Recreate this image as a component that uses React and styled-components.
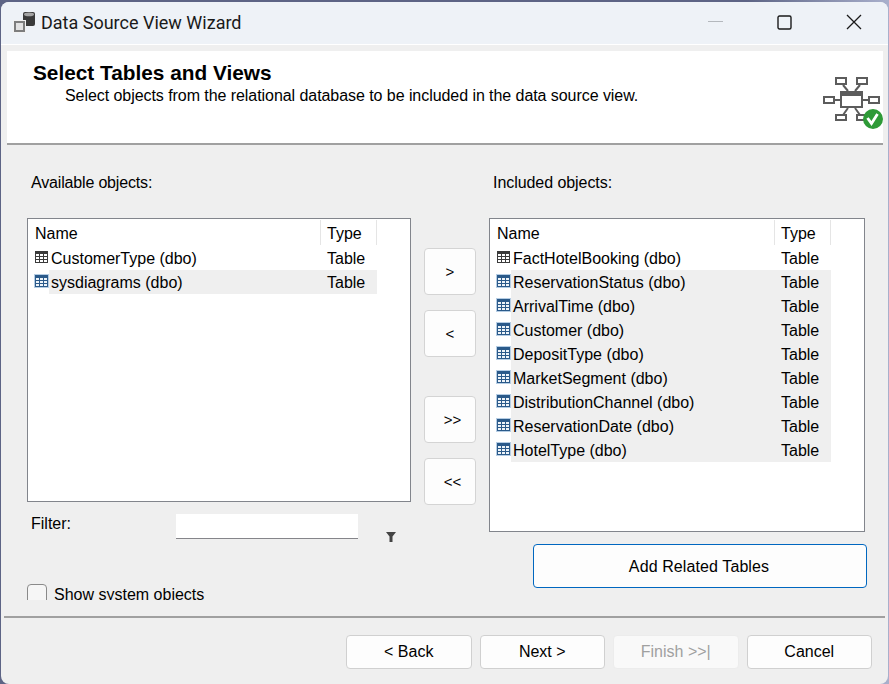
import React from 'react';
import styled, { createGlobalStyle } from 'styled-components';

const GlobalStyle = createGlobalStyle`
  html, body {
    margin: 0;
    padding: 0;
    background: #5d6485;
  }
  * {
    box-sizing: border-box;
  }
`;

const Desktop = styled.div`
  width: 889px;
  height: 684px;
  padding: 2px 0 0 1px;
  overflow: hidden;
  background: linear-gradient(90deg, #5d6485 0, #5d6485 84%, #a9b0cc 100%);
`;

const Window = styled.div`
  width: 887px;
  height: 682px;
  display: flex;
  flex-direction: column;
  background: #efefef;
  border-radius: 8px;
  overflow: hidden;
  font-family: "Liberation Sans", Arial, sans-serif;
  font-size: 16px;
  color: #000;
`;

const TitleBar = styled.div`
  flex: 0 0 43px;
  display: flex;
  align-items: center;
  padding: 0 0 2px 12px;
  background: #eef2f7;
  border-bottom: 1px solid #fff;
`;

const TitleText = styled.span`
  margin-left: 6px;
  font-family: Roboto, sans-serif;
  font-size: 18px;
  color: #1a1a1a;
`;

const WindowButtons = styled.div`
  margin-left: auto;
  display: flex;
  align-items: center;
  gap: 54px;
  padding-right: 26px;
`;

const Banner = styled.div`
  flex: 0 0 92px;
  margin: 6px 5px 0 6px;
  padding: 11px 0 0 26px;
  display: flex;
  justify-content: space-between;
  background: #fff;
`;

const BannerTitle = styled.div`
  font-size: 20.8px;
  font-weight: bold;
  line-height: 22px;
`;

const BannerSub = styled.div`
  margin: 3px 0 0 32px;
  line-height: 18px;
  letter-spacing: -0.06px;
`;

const BannerIcon = styled.div`
  margin-top: 13px;
  width: 63px;
  height: 56px;
`;

const Rule = styled.div`
  flex: none;
  height: 2px;
  background: #a0a0a0;
  margin: ${({ $margin }) => $margin};
`;

const Body = styled.div`
  flex: 1;
  display: grid;
  grid-template-columns: 384px 78px 376px;
  padding-left: 26px;
`;

const Column = styled.div`
  display: flex;
  flex-direction: column;
`;

const Caption = styled.div`
  height: 73px;
  padding: 29px 0 0 4px;
  line-height: 18px;
  letter-spacing: ${({ $spacing }) => $spacing}px;
`;

const ListBox = styled.div`
  height: ${({ $height }) => $height}px;
  background: #fff;
  border: 1px solid #82858c;
  padding-top: 1px;
`;

const ListHead = styled.div`
  width: ${({ $width }) => $width}px;
  height: 26px;
  display: flex;
  line-height: 28px;
`;

const NameHead = styled.div`
  flex: 1;
  padding-left: 7px;
`;

const TypeHead = styled.div`
  width: 57px;
  height: 25px;
  padding-left: 6px;
  border-left: 1px solid #e5e5e5;
  border-right: 1px solid #e5e5e5;
`;

const Row = styled.div`
  width: ${({ $width }) => $width}px;
  height: 24px;
  display: flex;
  align-items: flex-start;
  padding-left: 6px;
  line-height: 26px;
`;

const RowName = styled.div`
  flex: 1;
  height: 24px;
  padding-left: 2px;
  background: ${({ $selected }) => ($selected ? '#efefef' : 'transparent')};
`;

const RowType = styled.div`
  width: 56px;
  height: 24px;
  padding-left: 6px;
  background: ${({ $selected }) => ($selected ? '#efefef' : 'transparent')};
`;

const MoveColumn = styled.div`
  padding: 103px 0 0 13px;
  display: flex;
  flex-direction: column;
`;

const MoveButton = styled.button`
  width: 52px;
  height: 47px;
  margin-bottom: ${({ $gap }) => $gap}px;
  padding: 0 0 0 ${({ $double }) => ($double ? 5 : 0)}px;
  background: #fdfdfd;
  border: 1px solid #d4d4d4;
  border-radius: 4px;
  font: inherit;
  font-size: 15px;
  color: #000;
`;

const FilterRow = styled.div`
  display: flex;
  height: 40px;
  margin-top: 12px;
`;

const FilterLabel = styled.div`
  width: 149px;
  padding: 1px 0 0 4px;
  line-height: 18px;
`;

const FilterInput = styled.div`
  width: 182px;
  height: 25px;
  background: #fff;
  border-bottom: 1px solid #85858a;
`;

const FilterIcon = styled.div`
  margin: 18px 0 0 28px;

  svg {
    display: block;
  }
`;

const CheckRow = styled.div`
  height: 16px;
  margin-top: 30px;
  display: flex;
  overflow: hidden;
`;

const CheckBox = styled.div`
  width: 20px;
  height: 24px;
  background: #f6f6f6;
  border: 1px solid #8a8a8a;
  border-radius: 4px;
`;

const CheckLabel = styled.div`
  margin-left: 7px;
  line-height: 22px;
`;

const RelatedButton = styled.button`
  display: block;
  width: 334px;
  height: 44px;
  margin: 12px 0 0 44px;
  padding: 2px 2px 0 0;
  background: #fdfdfd;
  border: 1px solid #0067c0;
  border-radius: 4px;
  font: inherit;
  letter-spacing: 0.1px;
  color: #000;
`;

const Footer = styled.div`
  flex: 0 0 66px;
  display: flex;
  justify-content: flex-end;
  gap: 8px;
  padding: 17px 16px 0 0;
`;

const FootButton = styled.button`
  width: 125.5px;
  height: 34px;
  padding: 0;
  background: ${({ disabled }) => (disabled ? '#f9f9f9' : '#fdfdfd')};
  border: 1px solid ${({ disabled }) => (disabled ? '#ececec' : '#d0d0d0')};
  border-radius: 4px;
  font: inherit;
  color: ${({ disabled }) => (disabled ? '#a0a0a0' : '#000')};
`;

const TableIcon = ({ selected }) => {
  const ink = selected ? '#2b5a8a' : '#3b3b3b';
  return (
    <svg width="15" height="14" viewBox="0 0 15 14" style={{ flex: 'none', marginTop: 4 }}>
      {selected && <rect width="15" height="14" fill="#b5cde4" />}
      <rect x="1.5" y="1.5" width="12" height="11" fill={selected ? '#eef4f9' : '#fff'} stroke={ink} />
      <path d="M1 2h13v2H1z" fill={ink} />
      <path d="M2 6.5h11M2 9.5h11M5.5 4v8M9.5 4v8" fill="none" stroke={ink} />
    </svg>
  );
};

const AppIcon = () => (
  <svg width="22" height="21" viewBox="0 0 22 21" style={{ flex: 'none' }}>
    <rect x="10" y="0" width="12" height="14" rx="2" fill="#3a3a3a" />
    <ellipse cx="16" cy="2.4" rx="5" ry="1.8" fill="#a4a4a4" />
    <rect x="0.5" y="8.5" width="12" height="12" fill="#7d7d7d" stroke="#f2f2f2" />
    <rect x="3" y="11" width="7" height="7" fill="#e2e2e2" />
  </svg>
);

const MaximizeIcon = () => (
  <svg width="15" height="15" viewBox="0 0 15 15" style={{ display: 'block' }}>
    <rect x="1" y="1" width="13" height="13" rx="1.5" fill="none" stroke="#1a1a1a" strokeWidth="1.4" />
  </svg>
);

const CloseIcon = () => (
  <svg width="16" height="16" viewBox="0 0 16 16" style={{ display: 'block' }}>
    <path d="M1 1l14 14M15 1L1 15" stroke="#1a1a1a" strokeWidth="1.3" />
  </svg>
);

const MinimizeIcon = () => (
  <svg width="15" height="2" viewBox="0 0 15 2" style={{ display: 'block' }}>
    <rect width="15" height="1" fill="#b4b8bd" />
  </svg>
);

const DiagramIcon = () => (
  <svg width="63" height="56" viewBox="0 0 63 56" style={{ display: 'block' }}>
    <g fill="none" stroke="#5c5c5c" strokeWidth="2">
      <path d="M23 10l5 6M40 10l-5 6M14 25h7M42 25h7M23 40l5-7M40 40l-5-7" />
      <rect x="16" y="3" width="10" height="6" fill="#fff" />
      <rect x="37" y="3" width="10" height="6" fill="#fff" />
      <rect x="4" y="22" width="10" height="6" fill="#fff" />
      <rect x="49" y="22" width="10" height="6" fill="#fff" />
      <rect x="16" y="40" width="10" height="5" fill="#fff" />
      <rect x="37" y="40" width="10" height="5" fill="#fff" />
      <rect x="21" y="17" width="21" height="15" fill="#fff" />
    </g>
    <rect x="20" y="16" width="23" height="5" fill="#5c5c5c" />
    <circle cx="53" cy="44" r="10" fill="#2e9a37" />
    <path d="M47.5 43l4 5.5 6-9.5" fill="none" stroke="#fff" strokeWidth="2.8" />
  </svg>
);

const FunnelIcon = () => (
  <svg width="10" height="10" viewBox="0 0 10 10">
    <path d="M0 0h10L6.5 4.5V10h-3V4.5z" fill="#444" />
  </svg>
);

const available = [
  { name: 'CustomerType (dbo)' },
  { name: 'sysdiagrams (dbo)', selected: true },
];

const included = [
  { name: 'FactHotelBooking (dbo)' },
  { name: 'ReservationStatus (dbo)', selected: true },
  { name: 'ArrivalTime (dbo)', selected: true },
  { name: 'Customer (dbo)', selected: true },
  { name: 'DepositType (dbo)', selected: true },
  { name: 'MarketSegment (dbo)', selected: true },
  { name: 'DistributionChannel (dbo)', selected: true },
  { name: 'ReservationDate (dbo)', selected: true },
  { name: 'HotelType (dbo)', selected: true },
];

const ObjectList = ({ items, height, width }) => (
  <ListBox $height={height}>
    <ListHead $width={width}>
      <NameHead>Name</NameHead>
      <TypeHead>Type</TypeHead>
    </ListHead>
    {items.map((item) => (
      <Row key={item.name} $width={width}>
        <TableIcon selected={item.selected} />
        <RowName $selected={item.selected}>{item.name}</RowName>
        <RowType $selected={item.selected}>Table</RowType>
      </Row>
    ))}
  </ListBox>
);

export default function App() {
  return (
    <>
      <GlobalStyle />
      <Desktop>
        <Window>
          <TitleBar>
            <AppIcon />
            <TitleText>Data Source View Wizard</TitleText>
            <WindowButtons>
              <MinimizeIcon />
              <MaximizeIcon />
              <CloseIcon />
            </WindowButtons>
          </TitleBar>
          <Banner>
            <div>
              <BannerTitle>Select Tables and Views</BannerTitle>
              <BannerSub>Select objects from the relational database to be included in the data source view.</BannerSub>
            </div>
            <BannerIcon>
              <DiagramIcon />
            </BannerIcon>
          </Banner>
          <Rule $margin="0 5px 0 6px" />
          <Body>
            <Column>
              <Caption $spacing={-0.17}>Available objects:</Caption>
              <ObjectList items={available} height={284} width={349} />
              <FilterRow>
                <FilterLabel>Filter:</FilterLabel>
                <FilterInput />
                <FilterIcon>
                  <FunnelIcon />
                </FilterIcon>
              </FilterRow>
              <CheckRow>
                <CheckBox />
                <CheckLabel>Show system objects</CheckLabel>
              </CheckRow>
            </Column>
            <MoveColumn>
              <MoveButton $gap={15}>&gt;</MoveButton>
              <MoveButton $gap={39}>&lt;</MoveButton>
              <MoveButton $gap={15} $double>&gt;&gt;</MoveButton>
              <MoveButton $gap={0} $double>&lt;&lt;</MoveButton>
            </MoveColumn>
            <Column>
              <Caption $spacing={-0.06}>Included objects:</Caption>
              <ObjectList items={included} height={314} width={341} />
              <RelatedButton>Add Related Tables</RelatedButton>
            </Column>
          </Body>
          <Rule $margin="0 3px" />
          <Footer>
            <FootButton>&lt; Back</FootButton>
            <FootButton>Next &gt;</FootButton>
            <FootButton disabled>Finish &gt;&gt;|</FootButton>
            <FootButton>Cancel</FootButton>
          </Footer>
        </Window>
      </Desktop>
    </>
  );
}
